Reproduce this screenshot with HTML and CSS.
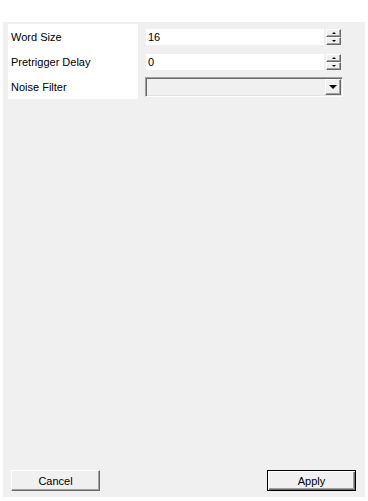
FILE: index.html
```html
<!DOCTYPE html>
<html lang="en">
<head>
    <meta charset="UTF-8">
    <meta name="viewport" content="width=device-width, initial-scale=1.0">
    <title>Settings</title>
    <link rel="stylesheet" href="styles.css">
</head>
<body>

<div id="panel">
    <div id="form">
        <div id="labels">
            <div class="label">Word Size</div>
            <div class="label">Pretrigger Delay</div>
            <div class="label">Noise Filter</div>
        </div>
        <div id="fields">
            <div class="row">
                <div class="spin-field">
                    <div class="edit">16</div>
                    <div class="spin">
                        <div class="spin-btn"><span class="arrow-up"></span></div>
                        <div class="spin-btn"><span class="arrow-down"></span></div>
                    </div>
                </div>
            </div>
            <div class="row">
                <div class="spin-field">
                    <div class="edit">0</div>
                    <div class="spin">
                        <div class="spin-btn"><span class="arrow-up"></span></div>
                        <div class="spin-btn"><span class="arrow-down"></span></div>
                    </div>
                </div>
            </div>
            <div class="row">
                <div class="combo">
                    <div class="combo-btn"><span class="arrow-drop"></span></div>
                </div>
            </div>
        </div>
    </div>

    <div id="buttons">
        <button class="btn">Cancel</button>
        <button class="btn default">Apply</button>
    </div>
</div>

</body>
</html>
```

FILE: styles.css
```css
body {
    font-family: "Liberation Sans", Arial, sans-serif;
    font-size: 11px;
    color: #000;
    margin: 0;
    background-color: white;
}
#panel {
    display: flex;
    flex-direction: column;
    justify-content: space-between;
    margin: 22px 0 0 3px;
    width: 362px;
    height: 475px;
    padding: 2px 0 6px 5px;
    box-sizing: border-box;
    background-color: #f0f0f0;
}
#form {
    display: flex;
    gap: 7px;
}
#labels {
    width: 130px;
    background-color: white;
}
.label {
    height: 25px;
    line-height: 26px;
    padding-left: 3px;
}
#fields {
    width: 198px;
}
.row {
    height: 25px;
    display: flex;
    align-items: center;
}
.spin-field {
    display: flex;
    gap: 2px;
    margin-left: 1px;
    margin-top: 1px;
}
.edit {
    width: 178px;
    height: 16px;
    line-height: 17px;
    padding-left: 2px;
    box-sizing: border-box;
    background-color: white;
}
.spin {
    display: flex;
    flex-direction: column;
    width: 15px;
    height: 16px;
}
.spin-btn {
    flex: 1;
    display: flex;
    align-items: center;
    justify-content: center;
    border: 1px solid;
    border-color: #fff #696969 #696969 #fff;
    box-shadow: inset -1px -1px #a0a0a0;
    background-color: #f0f0f0;
}
.arrow-up {
    width: 0;
    height: 0;
    border-left: 2px solid transparent;
    border-right: 2px solid transparent;
    border-bottom: 2px solid #000;
}
.arrow-down {
    width: 0;
    height: 0;
    border-left: 2px solid transparent;
    border-right: 2px solid transparent;
    border-top: 2px solid #000;
}
.combo {
    display: flex;
    justify-content: flex-end;
    align-items: center;
    width: 198px;
    height: 20px;
    margin-top: 1px;
    padding-right: 1px;
    box-sizing: border-box;
    border: 1px solid;
    border-color: #a0a0a0 #fff #fff #a0a0a0;
    box-shadow: inset 1px 1px #696969, inset -1px -1px #e3e3e3;
    background-color: #f0f0f0;
}
.combo-btn {
    width: 16px;
    height: 16px;
    display: flex;
    align-items: center;
    justify-content: center;
    box-sizing: border-box;
    border: 1px solid;
    border-color: #fff #696969 #696969 #fff;
    box-shadow: inset -1px -1px #a0a0a0;
    background-color: #f0f0f0;
}
.arrow-drop {
    width: 0;
    height: 0;
    border-left: 4px solid transparent;
    border-right: 4px solid transparent;
    border-top: 4px solid #000;
}
#buttons {
    display: flex;
    justify-content: space-between;
    padding: 0 9px 0 3px;
}
.btn {
    width: 89px;
    height: 21px;
    padding: 0;
    font-family: "Liberation Sans", Arial, sans-serif;
    font-size: 11px;
    color: #000;
    background-color: #f0f0f0;
    border: 1px solid;
    border-color: #fff #696969 #696969 #fff;
    box-shadow: inset -1px -1px #a0a0a0;
}
.btn.default {
    border-color: #000;
    box-shadow: inset 1px 1px #fff, inset -1px -1px #696969, inset -2px -2px #a0a0a0;
}
```
